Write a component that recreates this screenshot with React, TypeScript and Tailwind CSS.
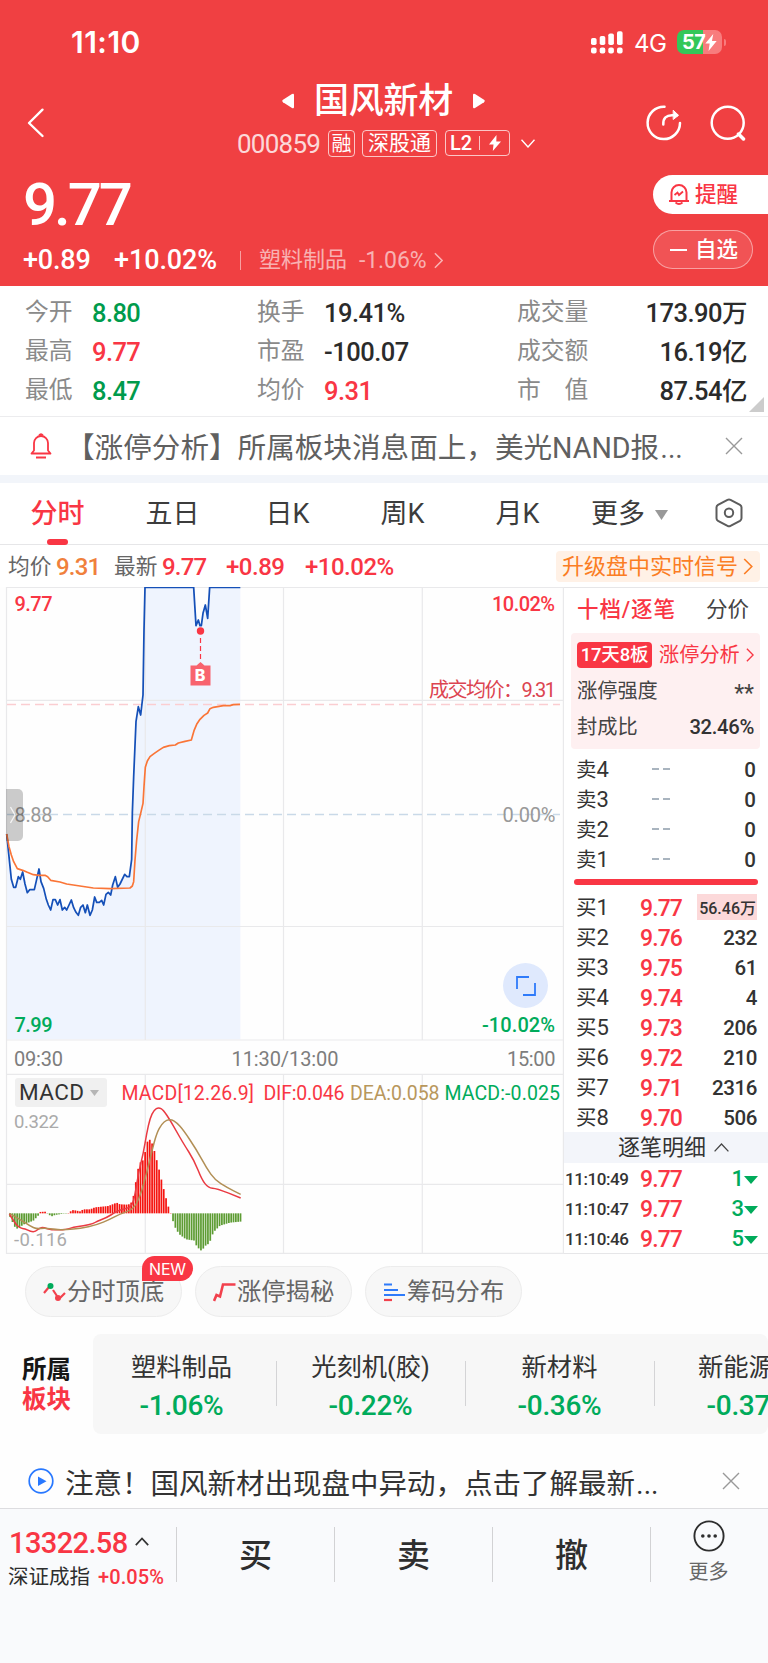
import React from "react";

type Pt = [number, number];

const pricePoints: Pt[] = [
  [20, 1062], [27, 1130], [34, 1198], [41, 1222], [47, 1222], [55, 1190], [61, 1198], [68, 1176], [75, 1212], [82, 1238],
  [89, 1229], [103, 1229], [110, 1198], [117, 1167], [123, 1205], [131, 1225], [139, 1258], [145, 1275], [152, 1290],
  [159, 1259], [166, 1259], [173, 1275], [180, 1259], [187, 1290], [194, 1282], [200, 1290], [214, 1260], [221, 1283],
  [228, 1297], [235, 1306], [242, 1282], [249, 1275], [256, 1298], [262, 1275], [270, 1306], [277, 1290], [284, 1251],
  [290, 1267], [298, 1267], [305, 1261], [311, 1275], [318, 1243], [325, 1237], [332, 1245], [338, 1215], [346, 1190],
  [353, 1222], [360, 1212], [374, 1183], [381, 1190], [388, 1190], [395, 1138], [397, 1000], [401, 890], [408, 725],
  [415, 680], [422, 705], [429, 645], [432, 450], [435, 322], [581, 322], [588, 437], [595, 420], [600, 437], [604, 437],
  [609, 400], [616, 375], [623, 415], [629, 322], [721, 322],
];

const averagePoints: Pt[] = [
  [20, 1062], [27, 1100], [34, 1125], [41, 1145], [52, 1166], [68, 1171], [82, 1177], [100, 1184], [117, 1186],
  [135, 1186], [143, 1190], [152, 1201], [180, 1206], [200, 1212], [240, 1218], [280, 1224], [330, 1226], [390, 1224],
  [397, 1218], [401, 1205], [405, 1140], [410, 1080], [416, 1025], [422, 1000], [429, 970], [432, 920], [434, 890],
  [436, 862], [442, 843], [450, 830], [462, 821], [476, 811], [490, 802], [508, 797], [526, 795], [535, 789], [555, 784],
  [574, 780], [582, 752], [590, 733], [600, 718], [612, 706], [623, 699], [630, 686], [640, 682], [670, 677], [690, 677],
  [700, 674], [720, 673],
];

const difPoints: Pt[] = [
  [28, 432], [45, 460], [60, 475], [75, 476], [92, 485], [107, 485], [118, 474], [130, 472], [155, 480], [200, 479],
  [220, 471], [250, 468], [280, 461], [290, 454], [320, 443], [345, 427], [360, 420], [385, 414], [397, 405], [405, 375],
  [415, 310], [430, 250], [440, 190], [450, 145], [462, 120], [476, 112], [490, 120], [510, 150], [530, 185], [550, 220],
  [583, 272], [605, 328], [625, 354], [650, 355], [722, 384],
];

const deaPoints: Pt[] = [
  [28, 430], [60, 448], [90, 468], [110, 477], [135, 474], [165, 479], [200, 479], [240, 475], [290, 465], [330, 448],
  [360, 432], [400, 418], [420, 380], [440, 310], [455, 245], [470, 190], [485, 162], [500, 150], [515, 149], [530, 158],
  [550, 180], [590, 240], [620, 295], [645, 330], [680, 352], [722, 373],
];

const histogramKeys: Pt[] = [
  [30, -10], [37, -25], [44, -40], [51, -46], [58, -42], [72, -33], [100, -22], [114, -8], [118, 4], [135, 5], [141, 1],
  [148, -5], [155, -9], [165, -5], [190, -1], [208, 1], [215, 10], [225, 9], [240, 6], [250, 12], [270, 12], [285, 18],
  [305, 20], [325, 22], [340, 28], [350, 32], [360, 27], [385, 26], [397, 35], [404, 70], [411, 118], [418, 150],
  [432, 162], [439, 208], [446, 223], [453, 218], [460, 200], [467, 172], [474, 145], [481, 115], [488, 85], [495, 58],
  [502, 30], [509, 8], [513, -2], [516, -12], [523, -38], [537, -62], [558, -78], [585, -82], [590, -100], [605, -113],
  [615, -98], [628, -90], [640, -57], [660, -37], [690, -28], [730, -24],
];

function valueAt(x: number): number {
  for (let i = 1; i < histogramKeys.length; i++) {
    const [x1, y1] = histogramKeys[i];
    const [x0, y0] = histogramKeys[i - 1];
    if (x <= x1) return y0 + ((y1 - y0) * (x - x0)) / (x1 - x0);
  }
  return -24;
}

const bars: Pt[] = Array.from({ length: 100 }, (_, i) => {
  const x = 30.5 + i * 6.98;
  return [x, valueAt(x)];
});

const toLine = (pts: Pt[]) => pts.map((p) => p.join(",")).join(" ");

function toCurve(pts: Pt[]): string {
  let d = `M${pts[0][0]} ${pts[0][1]}`;
  for (let i = 1; i < pts.length - 1; i++) {
    const mx = (pts[i][0] + pts[i + 1][0]) / 2;
    const my = (pts[i][1] + pts[i + 1][1]) / 2;
    d += ` Q${pts[i][0]} ${pts[i][1]} ${mx} ${my}`;
  }
  const last = pts[pts.length - 1];
  return `${d} L${last[0]} ${last[1]}`;
}

function ChevronRight({ className }: { className: string }) {
  return (
    <svg viewBox="0 0 10 18" fill="none" stroke="currentColor" strokeWidth="1.7" className={className}>
      <path d="M1 1l8 8-8 8" />
    </svg>
  );
}

function CloseIcon({ className }: { className: string }) {
  return (
    <svg viewBox="0 0 18 18" fill="none" stroke="#999" strokeWidth="1.4" className={className}>
      <path d="M1 1l16 16M17 1L1 17" />
    </svg>
  );
}

function StatusBar() {
  return (
    <div className="flex h-[84px] items-center pl-[71px] pr-[46px] text-white">
      <span className="font-[Inter] text-[30px] font-semibold leading-none tracking-[0.5px]">11:10</span>
      <svg viewBox="0 0 32 23" className="ml-auto h-[23px] w-8" fill="#fff">
        <rect x="0" y="7" width="5.6" height="7" rx="1.8" />
        <rect x="8.7" y="5" width="5.6" height="9" rx="1.8" />
        <rect x="17.3" y="2.5" width="5.6" height="11.5" rx="1.8" />
        <rect x="26" y="0.3" width="5.6" height="13.7" rx="1.8" />
        <rect x="0" y="16.6" width="5.6" height="6" rx="2" />
        <rect x="8.7" y="16.6" width="5.6" height="6" rx="2" />
        <rect x="17.3" y="16.6" width="5.6" height="6" rx="2" />
        <rect x="26" y="16.6" width="5.6" height="6" rx="2" />
      </svg>
      <span className="ml-[11px] mt-[3px] w-[37px] font-[Inter] text-[24px] leading-none tracking-[-0.4px]">4G</span>
      <div className="ml-[6px] flex h-6 w-[45px] items-center overflow-hidden rounded-[7px] bg-gradient-to-r from-[#34c759] from-58% to-[#f87c7d] to-58%">
        <span className="pl-[5px] font-[Inter] text-[20px] font-bold leading-none tracking-[-0.6px]">57</span>
        <svg viewBox="0 0 12 18" className="h-[17px] w-3" fill="#fff">
          <path d="M8.4 0L0 10h4.6L3.4 18 12 7.400H7z" />
        </svg>
      </div>
      <div className="-mr-[4px] ml-[2px] h-[7px] w-[2px] rounded-r bg-[#f87c7d]" />
    </div>
  );
}

function TitleBar() {
  return (
    <div className="flex h-[78px] text-white">
      <svg viewBox="0 0 18 30" className="ml-[27px] mt-[24px] h-[30px] w-[18px]" fill="none" stroke="#fff" strokeWidth="2.4" strokeLinecap="round" strokeLinejoin="round">
        <path d="M15.500 1.700L2 15l13.500 13" />
      </svg>
      <div className="ml-[191px] flex w-[303px] flex-col">
        <div className="flex h-[34px] items-center justify-center pr-[8px]">
          <svg viewBox="0 0 12 16" className="h-4 w-3" fill="#fff">
            <path d="M12 2v12q0 2-2 1L1 9.200Q-.5 8 1 6.800L10 1q2-1 2 1z" />
          </svg>
          <h1 className="mx-[20px] whitespace-nowrap text-[35px] font-medium leading-none tracking-[-0.3px]">国风新材</h1>
          <svg viewBox="0 0 12 16" className="h-4 w-3" fill="#fff">
            <path d="M0 2v12q0 2 2 1l9-5.800q1.500-1.200 0-2.400L2 1Q0 0 0 2z" />
          </svg>
        </div>
        <div className="mt-[11px] flex h-7 items-center leading-none">
          <span className="mt-[2px] w-[92px] pl-px text-[26px] tracking-[-0.75px] opacity-80">000859</span>
          <span className="flex h-[27px] w-[27px] items-center justify-center rounded-[4px] border border-white/70 pt-px text-[20px]">融</span>
          <span className="ml-[7px] flex h-[27px] w-[75px] items-center justify-center rounded-[4px] border border-white/70 pt-px text-[21px]">深股通</span>
          <span className="ml-[8px] flex h-[26px] w-[65px] items-center rounded-[4px] border border-white/70 pl-[4px] text-[20px] font-medium">
            L2
            <i className="ml-[7px] h-[14px] w-px bg-white/70" />
            <svg viewBox="0 0 12 16" className="ml-[9px] h-4 w-3" fill="#fff">
              <path d="M7.500 0L0 9.500h4.500L3.800 16 12 6.500H7.300z" />
            </svg>
          </span>
          <svg viewBox="0 0 14 9" className="ml-[11px] h-[9px] w-[14px]" fill="none" stroke="#fff" strokeWidth="1.4">
            <path d="M.5.800L7 8l6.500-7.200" />
          </svg>
        </div>
      </div>
      <svg viewBox="0 0 36 36" className="ml-[107px] mt-[21px] h-9 w-9" fill="none" stroke="#fff" strokeWidth="2.500" strokeLinecap="round">
        <path d="M18.500 1.700A16.200 16.200 0 1 0 34 18" />
        <path d="M17.300 19.500C17 13 20.500 10.300 26 10.300h5" />
        <path d="M27.500 5.500l5 4.800-5 4z" fill="#fff" strokeWidth="1" />
      </svg>
      <svg viewBox="0 0 36 36" className="ml-[28px] mt-[21px] h-9 w-9" fill="none" stroke="#fff" strokeWidth="2.500" strokeLinecap="round">
        <circle cx="17.700" cy="17.700" r="16" />
        <path d="M28.500 29l5 5" strokeWidth="3.500" />
      </svg>
    </div>
  );
}

function PriceHeader() {
  return (
    <div className="flex h-[124px] justify-between text-white">
      <div className="pl-[23px]">
        <div className="flex h-[84px] items-center pt-[1px] text-[60px] font-medium leading-none tracking-[-3px]">9.77</div>
        <div className="flex h-7 items-center whitespace-nowrap leading-none">
          <span className="w-[91px] text-[27px] font-medium tracking-[-0.2px]">+0.89</span>
          <span className="w-[126px] text-[27px] font-medium tracking-[-0.1px]">+10.02%</span>
          <i className="h-[19px] w-px bg-white/50" />
          <span className="ml-[18px] text-[22px] text-white/60">塑料制品</span>
          <span className="ml-[12px] text-[23px] tracking-[-0.100px] text-white/60">-1.06%</span>
          <ChevronRight className="ml-[8px] h-[17px] w-[9px] text-white/60" />
        </div>
      </div>
      <div className="flex w-[115px] flex-col pt-[13px] leading-none">
        <div className="flex h-[39px] items-center rounded-l-full bg-white pl-[15px] text-[21.500px] font-medium text-[#f93644]">
          <svg viewBox="0 0 22 23" className="mr-[5px] h-[23px] w-[22px]" fill="none" stroke="#f93644" strokeWidth="2">
            <path d="M1 18h20M3.500 18V9.500a7.500 7.500 0 0 1 15 0V18" />
            <path d="M7.500 19.500q3.500 3 7 0M6.500 12l3-2.500 1.500 2.500 4-3.500" strokeWidth="1.800" />
          </svg>
          提醒
        </div>
        <div className="mt-[16px] flex h-[39px] w-[100px] items-center rounded-full border border-white/45 bg-white/10 pl-4 text-[21.500px] font-medium">
          <i className="mr-[8px] h-[2px] w-[17px] bg-white" />
          自选
        </div>
      </div>
    </div>
  );
}

const stats = [
  ["今开", "8.80", "text-[#009b4c]", "换手", "19.41%", "text-[#2b2b2b]", "成交量", "173.90万"],
  ["最高", "9.77", "text-[#f93644]", "市盈", "-100.07", "text-[#2b2b2b]", "成交额", "16.19亿"],
  ["最低", "8.47", "text-[#009b4c]", "均价", "9.31", "text-[#f93644]", "市　值", "87.54亿"],
];

function Stats() {
  return (
    <div className="relative h-[131px] border-b border-[#ececee] bg-white pt-[7px]">
      {stats.map((r) => (
        <div key={r[0]} className="flex h-[39px] items-center pl-[25px] pr-[21px] leading-none">
          <span className="w-[67px] text-[23.800px] text-[#8a8a8a]">{r[0]}</span>
          <span className={`w-[165px] pt-[2px] text-[25.500px] font-medium tracking-[-0.6px] ${r[2]}`}>{r[1]}</span>
          <span className="w-[67px] text-[23.800px] text-[#8a8a8a]">{r[3]}</span>
          <span className={`w-[193px] pt-[2px] text-[25.500px] font-medium tracking-[-0.5px] ${r[5]}`}>{r[4]}</span>
          <span className="text-[23.800px] text-[#8a8a8a]">{r[6]}</span>
          <span className="ml-auto pt-[2px] text-[25.500px] font-medium tracking-[-0.5px] text-[#2b2b2b]">{r[7]}</span>
        </div>
      ))}
      <svg viewBox="0 0 15 15" className="absolute bottom-1 right-1 h-[15px] w-[15px]" fill="#ccc">
        <path d="M15 0v15H0z" />
      </svg>
    </div>
  );
}

function LimitNotice() {
  return (
    <div className="flex h-[66px] items-center border-b-8 border-[#f2f5fa] bg-white pl-[30px] pr-[25px] leading-none text-[#606060]">
      <svg viewBox="0 0 22 26" className="h-[26px] w-[22px]" fill="none" stroke="#f93644" strokeWidth="1.800" strokeLinejoin="round">
        <path d="M1.500 20.500l2.500-3V10a7 7 0 0 1 14 0v7.500l2.500 3zM6 24.500h10" />
        <path d="M9 2.500q2-2.500 4 0" />
      </svg>
      <span className="ml-[14px] flex items-baseline whitespace-nowrap pt-[2px] text-[28.600px]">
        【涨停分析】所属板块消息面上，美光NAND报
        <span className="text-[38px] font-light leading-[28px]">…</span>
      </span>
      <CloseIcon className="ml-auto h-[18px] w-[18px]" />
    </div>
  );
}

function ChartTabs() {
  return (
    <div className="flex h-[62px] border-b border-[#e6e6e8] bg-white text-[27px] leading-none text-[#3c3c3c]">
      <div className="relative flex w-[115px] items-center justify-center pt-[2px] font-medium text-[#f93644]">
        分时
        <i className="absolute bottom-[-0.500px] left-[47px] h-[6px] w-[21px] rounded-full bg-[#f93644]" />
      </div>
      {["五日", "日K", "周K", "月K"].map((t) => (
        <div key={t} className="flex w-[115px] items-center justify-center pt-[2px]">{t}</div>
      ))}
      <div className="flex items-center pl-4 pt-[2px]">
        更多
        <svg viewBox="0 0 13 10" className="ml-[10px] h-[10px] w-[13px]" fill="#999">
          <path d="M0 0h13L6.500 10z" />
        </svg>
      </div>
      <svg viewBox="0 0 28 30" className="mb-auto ml-auto mr-[25px] mt-[15px] h-[30px] w-7" fill="none" stroke="#5c5c5c" strokeWidth="2">
        <path d="M12.500 1.800q1.500-.8 3 0l9.500 5q1.500 1 1.500 2.500v11q0 1.500-1.500 2.500l-9.500 5q-1.500.8-3 0l-9.500-5Q1.500 22 1.500 20.300v-11q0-1.500 1.500-2.500z" />
        <circle cx="14" cy="14.800" r="4.200" />
      </svg>
    </div>
  );
}

function QuoteLine() {
  return (
    <div className="flex h-[42px] items-center bg-white pl-2 pr-2 text-[24px] font-medium leading-none tracking-[-0.8px] text-[#f93644]">
      <span className="w-[48px] pt-px text-[21.700px] font-normal tracking-normal text-[#666]">均价</span>
      <span className="w-[58px] pt-[2px] text-[#f0803c]">9.31</span>
      <span className="w-[48px] pt-px text-[21.700px] font-normal tracking-normal text-[#666]">最新</span>
      <span className="w-[64px] pt-[2px]">9.77</span>
      <span className="w-[79px] pt-[2px] tracking-[-0.5px]">+0.89</span>
      <span className="pt-[2px] tracking-[-0.5px]">+10.02%</span>
      <span className="ml-auto flex h-[31px] w-[204px] items-center rounded-[4px] bg-[#fff1e6] pl-[6px] pt-px text-[22px] font-normal tracking-normal text-[#fb7d23]">
        升级盘中实时信号
        <ChevronRight className="ml-[5px] h-[17px] w-[10px]" />
      </span>
    </div>
  );
}

function Chart() {
  return (
    <div className="relative h-[667px] w-[564px] shrink-0">
      <svg viewBox="0 587 564 667" className="block h-[667px] w-[564px] font-medium" fill="none">
        <g transform="translate(0 480) scale(0.333333)">
          <polygon points={`${toLine(pricePoints)} 721,1678 20,1678`} fill="#eff4fe" />
        </g>
        <g stroke="#e9e9eb" strokeWidth="1.200">
          <path d="M6 587.500H768M6.500 587V1254M145.300 587V1040M283.500 587V1040M422.300 587V1040M563.400 587V1254" />
          <path d="M6 700.300H563M6 926.500H563M6 1040H563M6 1074.300H563M6 1184.300H563M6 1253.300H564" />
          <path d="M145.300 1074V1253M283.500 1074V1253M422.300 1074V1253" />
        </g>
        <path d="M7 704.400H560" stroke="#fbcdd1" strokeWidth="1.500" strokeDasharray="9 5" />
        <path d="M7 814.500H560" stroke="#c9d9e8" strokeWidth="1.300" strokeDasharray="9 5" />
        <g transform="translate(0 480) scale(0.333333)" strokeLinejoin="round">
          <polyline points={toLine(pricePoints)} stroke="#1550b8" strokeWidth="5.200" />
          <polyline points={toLine(averagePoints)} stroke="#fa7537" strokeWidth="5" />
        </g>
        <circle cx="200.500" cy="631" r="3.700" fill="#f93644" />
        <path d="M200.500 638v22" stroke="#f93644" strokeWidth="1.200" strokeDasharray="5 3" />
        <path d="M190.500 665.500h6l4-3.500 4 3.500h6v20h-20z" fill="#f8636e" />
        <text x="194.800" y="681" fill="#fff" fontFamily="Inter" fontSize="16" fontWeight="800">B</text>

        <g fontSize="20" fontFamily="Roboto, 'Noto Sans CJK SC', sans-serif">
          <text x="14.500" y="610.500" fill="#f93644" textLength="38">9.77</text>
          <text x="492" y="610.500" fill="#f93644" textLength="63">10.02%</text>
          <text x="429" y="697" fill="#dc4450" textLength="127" fontWeight="400">成交均价：9.31</text>
          <text x="14.500" y="821.500" fill="#999" textLength="38" fontWeight="400">8.88</text>
          <text x="502.500" y="821.500" fill="#999" textLength="53" fontWeight="400">0.00%</text>
          <text x="14.500" y="1032" fill="#00ab5b" textLength="38">7.99</text>
          <text x="482" y="1032" fill="#00ab5b" textLength="73">-10.02%</text>
          <g fontWeight="400" fill="#7d7d7d">
            <text x="14" y="1065.500" textLength="49">09:30</text>
            <text x="231.500" y="1065.500" textLength="107">11:30/13:00</text>
            <text x="507" y="1065.500" textLength="48.500">15:00</text>
          </g>
          <g fontSize="18.500" fontWeight="400" fill="#aaa">
            <text x="14" y="1127.500" textLength="45">0.322</text>
            <text x="14" y="1246" textLength="53">-0.116</text>
          </g>
          <g fontSize="19.500" fontWeight="400">
            <text x="121.500" y="1100" fill="#f93644" textLength="132.500">MACD[12.26.9]</text>
            <text x="263.500" y="1100" fill="#f93644" textLength="81">DIF:0.046</text>
            <text x="350" y="1100" fill="#b8975c" textLength="89.500">DEA:0.058</text>
            <text x="444.500" y="1100" fill="#00ab5b" textLength="115.500">MACD:-0.025</text>
          </g>
        </g>

        <g transform="translate(0 1070) scale(0.333333)">
          {bars.map(([x, v], i) => (
            <rect
              key={i}
              x={x - 2.6}
              y={v > 0 ? 430 - v : 430}
              width="5.200"
              height={Math.max(Math.abs(v), 1)}
              fill={v > 0 ? "#f51410" : "#5d9c33"}
            />
          ))}
          <path d={toCurve(difPoints)} stroke="#ea3a42" strokeWidth="4.500" />
          <path d={toCurve(deaPoints)} stroke="#b28f55" strokeWidth="4.500" />
        </g>
      </svg>
      <div className="absolute left-[6px] top-[202px] flex h-[52px] w-[17px] items-center rounded-r-[5px] bg-black/20 pl-[4px]">
        <svg viewBox="0 0 6 18" className="h-[18px] w-[6px]" fill="none" stroke="#fff" strokeOpacity="0.8" strokeWidth="1.300">
          <path d="M.5 1L5 9 .5 17" />
        </svg>
      </div>
      <div className="absolute left-[503px] top-[376px] flex h-[45px] w-[45px] items-center justify-center rounded-full bg-[#dfe9fd]">
        <svg viewBox="0 0 20 20" className="h-5 w-5" fill="none" stroke="#2f7bfa" strokeWidth="1.800">
          <path d="M13 1H1v12M7 19h12V7" />
        </svg>
      </div>
      <div className="absolute left-[15px] top-[491px] flex h-[29px] w-[92px] items-center rounded-[3px] bg-[#f0f0f0] pb-px pl-1 leading-none text-[#333]">
        <span className="text-[22.500px] tracking-[0.4px]">MACD</span>
        <svg viewBox="0 0 9 6" className="ml-[6px] mt-[2px] h-[6px] w-[9px]" fill="#b5b5b5">
          <path d="M0 0h9L4.500 6z" />
        </svg>
      </div>
    </div>
  );
}

const buys = [
  ["1", "9.77", "56.46万"],
  ["2", "9.76", "232"],
  ["3", "9.75", "61"],
  ["4", "9.74", "4"],
  ["5", "9.73", "206"],
  ["6", "9.72", "210"],
  ["7", "9.71", "2316"],
  ["8", "9.70", "506"],
];

const ticks = [
  ["11:10:49", "1"],
  ["11:10:47", "3"],
  ["11:10:46", "5"],
];

function OrderBook() {
  return (
    <div className="flex h-[667px] w-[204px] flex-col border-t border-[#e6e6e8] bg-white leading-none text-[#333]">
      <div className="flex h-[46px] items-center justify-between pb-px pl-[13px] pr-[19px] text-[21.500px]">
        <span className="font-medium tracking-[0.9px] text-[#f93644]">十档/逐笔</span>
        <span className="text-[#444]">分价</span>
      </div>
      <div className="ml-[7px] h-[116px] w-[189px] shrink-0 rounded-[4px] bg-[#fef0f1] px-[6px] pt-1 text-[20.200px] text-[#444]">
        <div className="flex h-9 items-center">
          <span className="flex h-[26px] w-[75px] items-center justify-center rounded-[4px] bg-[#f93644] pt-px text-[18.500px] font-medium tracking-[-0.200px] text-white">17天8板</span>
          <span className="ml-[7px] text-[#f93644]">涨停分析</span>
          <ChevronRight className="ml-[6px] h-[14px] w-[8px] text-[#f93644]" />
        </div>
        <div className="flex h-9 items-center justify-between"><span>涨停强度</span><span className="pt-[5px] text-[23px]">**</span></div>
        <div className="flex h-9 items-center justify-between"><span>封成比</span><span className="font-medium tracking-[-0.3px] text-[#333]">32.46%</span></div>
      </div>
      <div className="mt-[5px] pl-3 pr-3">
        {["4", "3", "2", "1"].map((n) => (
          <div key={n} className="flex h-[30px] items-center text-[20.500px]">
            <span className="w-[76px] pt-px">卖<span className="text-[22px]">{n}</span></span>
            <i className="h-[2px] w-[7px] bg-[#a9b4bf]" />
            <i className="ml-[4px] h-[2px] w-[7px] bg-[#a9b4bf]" />
            <span className="ml-auto pt-[2px] text-[20.500px] font-medium">0</span>
          </div>
        ))}
      </div>
      <div className="ml-[10px] mt-[5px] h-[6px] w-[184px] shrink-0 rounded-full bg-[#f93644]" />
      <div className="mt-[7px] pl-3 pr-[11px]">
        {buys.map(([n, price, volume]) => (
          <div key={n} className="flex h-[30px] items-center pt-[2px] text-[20.500px]">
            <span className="w-[64px]">买<span className="text-[22px]">{n}</span></span>
            <span className="text-[23px] font-medium tracking-[-0.9px] text-[#f93644]">{price}</span>
            {n === "1" ? (
              <span className="-mt-[2px] ml-auto flex h-[26px] w-[60px] items-center justify-end bg-[#fcd9da] pr-px pt-[3px] text-[16px] font-medium">{volume}</span>
            ) : (
              <span className="ml-auto text-[20.500px] font-medium tracking-[-0.400px]">{volume}</span>
            )}
          </div>
        ))}
      </div>
      <div className="flex h-[31px] shrink-0 items-center bg-[#f3f5fa] pl-[54px] text-[22px]">
        逐笔明细
        <svg viewBox="0 0 15 9" className="ml-[8px] h-[9px] w-[15px]" fill="none" stroke="#444" strokeWidth="1.300">
          <path d="M.6 8.400L7.500 1l6.900 7.400" />
        </svg>
      </div>
      <div className="flex-1 border-b border-[#e6e6e8]">
        {ticks.map(([time, n]) => (
          <div key={time} className="flex h-[30px] items-center pl-px pr-[10px] pt-[2px]">
            <span className="w-[75px] text-[17px] font-medium tracking-[-0.450px]">{time}</span>
            <span className="text-[23px] font-medium tracking-[-0.900px] text-[#f93644]">9.77</span>
            <span className="ml-auto text-[22px] font-medium text-[#00ab5b]">{n}</span>
            <svg viewBox="0 0 14 8" className="mt-[2px] h-2 w-[14px]" fill="#00ab5b">
              <path d="M0 0h14L7 8z" />
            </svg>
          </div>
        ))}
      </div>
    </div>
  );
}

function Chips() {
  const chip = "relative flex h-[51px] w-[157px] items-center rounded-full border border-[#ececec] bg-[#f7f7f7] pl-[17px] pt-px";
  return (
    <div className="flex gap-[13px] pl-[25px] pt-[12px] text-[24.300px] leading-none text-[#666]">
      <div className={chip}>
        <svg viewBox="0 0 23 20" className="mr-px h-5 w-[23px]" fill="none" strokeWidth="2">
          <path d="M1 11l5-6M10 8l4 6M17 16l5-5" stroke="#f2414d" strokeWidth="2.200" />
          <circle cx="7.500" cy="4" r="3" fill="#00ab5b" />
          <circle cx="15" cy="16" r="3" fill="#f2414d" />
        </svg>
        分时顶底
        <span className="absolute -top-[11px] left-[116px] flex h-[25px] w-[51px] items-center justify-center rounded-full rounded-bl-[2px] bg-[#f93644] font-[Inter] text-[16px] tracking-[-0.200px] text-white">NEW</span>
      </div>
      <div className={chip}>
        <svg viewBox="0 0 23 20" className="mr-px h-5 w-[23px]" fill="none" stroke="#f2414d" strokeWidth="2.600">
          <path d="M1 19l2.500-6 3.500 1.500 3-12h12.500" />
        </svg>
        涨停揭秘
      </div>
      <div className={chip}>
        <svg viewBox="0 0 23 20" className="mr-px h-5 w-[23px]" fill="none" stroke="#2f7bfa" strokeWidth="2.200">
          <path d="M1 2.500h8M1 8h14M1 13h21" />
          <path d="M1 18h8" stroke="#f2414d" />
        </svg>
        筹码分布
      </div>
    </div>
  );
}

const sectors = [
  ["塑料制品", "-1.06%"],
  ["光刻机(胶)", "-0.22%"],
  ["新材料", "-0.36%"],
  ["新能源车", "-0.37%"],
];

function Sectors() {
  return (
    <div className="mt-[17px] flex h-[100px] items-center leading-none">
      <div className="w-[93px] shrink-0 pl-[22px] pt-[2px] text-[24.500px] font-bold">
        <div className="mb-[5px] text-[#161616]">所属</div>
        <div className="text-[#f93644]">板块</div>
      </div>
      <div className="flex h-[100px] w-[675px] items-center overflow-hidden rounded-[8px] bg-[#f7f7f7]">
        <div className="-ml-[6px] flex">
          {sectors.map(([name, pct]) => (
            <div key={name} className="relative flex w-[189px] shrink-0 flex-col items-center whitespace-nowrap pt-[7px]">
              <span className="text-[25.300px] text-[#333]">{name}</span>
              <span className="mt-[12px] text-[28px] font-medium tracking-[-0.300px] text-[#00ab5b]">{pct}</span>
              <i className="absolute -right-px top-[13px] h-[45px] w-px bg-[#d4d4d6]" />
            </div>
          ))}
        </div>
      </div>
    </div>
  );
}

function AlertNotice() {
  return (
    <div className="mt-[20px] flex h-[54px] items-center pl-[28px] pr-[28px] leading-none text-[#333]">
      <svg viewBox="0 0 26 26" className="h-[26px] w-[26px]" fill="none">
        <circle cx="13" cy="13" r="11.800" stroke="#2878ff" strokeWidth="1.700" />
        <path d="M10 8.500l8.500 4.800-8.500 4.700z" fill="#2878ff" />
      </svg>
      <span className="ml-[11px] flex items-baseline whitespace-nowrap pt-[4px] text-[28.500px]">
        注意！国风新材出现盘中异动，点击了解最新
        <span className="text-[38px] font-light leading-[28px]">…</span>
      </span>
      <CloseIcon className="ml-auto h-[18px] w-[18px]" />
    </div>
  );
}

function TradeBar() {
  return (
    <div className="h-[155px] border-t border-[#dddde0] bg-[#f9fafc] leading-none text-[#2e2e2e]">
      <div className="flex h-[90px] items-center">
        <div className="w-[176px] pl-2 pt-[8px]">
          <div className="flex items-center pl-[1px]">
            <span className="text-[29px] font-medium tracking-[-0.600px] text-[#f93644]">13322.58</span>
            <svg viewBox="0 0 14 9" className="-mt-1 ml-[7px] h-[9px] w-[14px]" fill="none" stroke="#333" strokeWidth="1.700">
              <path d="M.8 8.200L7 1.500l6.200 6.700" />
            </svg>
          </div>
          <div className="mt-[9px] flex items-center whitespace-nowrap text-[20.500px]">
            深证成指
            <span className="ml-[8px] text-[20px] font-medium tracking-[0.100px] text-[#f93644]">+0.05%</span>
          </div>
        </div>
        {["买", "卖", "撤"].map((t) => (
          <div key={t} className="flex h-[55px] w-[158px] items-center justify-center border-l border-[#d2d2d4] pt-[2px] text-[33px] font-medium">{t}</div>
        ))}
        <div className="flex h-[55px] flex-1 flex-col items-center border-l border-[#d2d2d4] pr-[2px]">
          <svg viewBox="0 0 32 32" className="-mt-[7px] h-8 w-8 shrink-0" fill="#2e2e2e">
            <circle cx="16" cy="16" r="14.600" fill="none" stroke="#2e2e2e" strokeWidth="1.900" />
            <circle cx="9.800" cy="16" r="1.800" />
            <circle cx="16" cy="16" r="1.800" />
            <circle cx="22.200" cy="16" r="1.800" />
          </svg>
          <span className="mt-[10px] text-[20px] text-[#666]">更多</span>
        </div>
      </div>
    </div>
  );
}

export default function App() {
  return (
    <div className="h-[1663px] w-[768px] overflow-hidden bg-[#fefefe] font-[Roboto,'Noto_Sans_CJK_SC',sans-serif]">
      <header className="h-[286px] bg-[#f04042]">
        <StatusBar />
        <TitleBar />
        <PriceHeader />
      </header>
      <Stats />
      <LimitNotice />
      <ChartTabs />
      <QuoteLine />
      <div className="flex h-[667px]">
        <Chart />
        <OrderBook />
      </div>
      <Chips />
      <Sectors />
      <AlertNotice />
      <TradeBar />
    </div>
  );
}
